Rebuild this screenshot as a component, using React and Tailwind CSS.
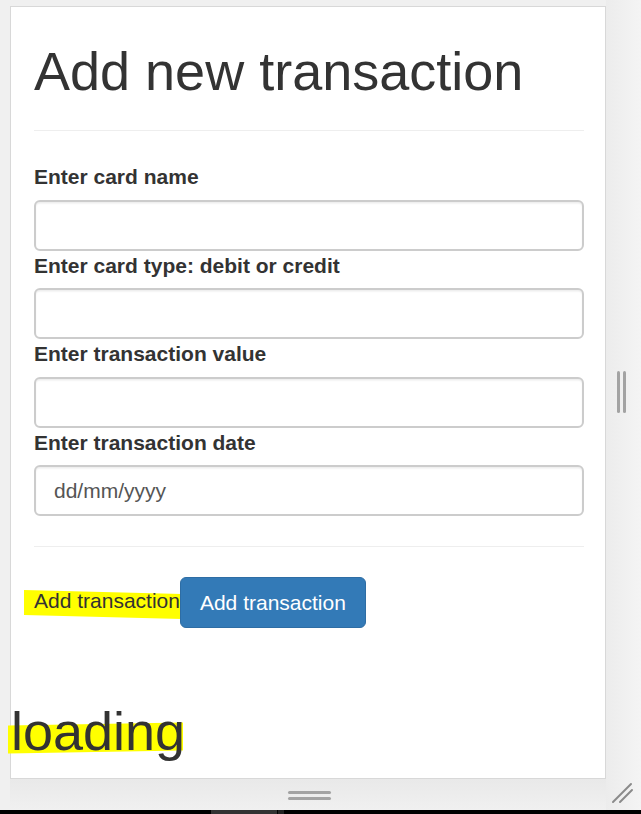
const Field = ({ label, placeholder }) => (
  <div>
    <label className="block font-bold leading-[30px] mb-[7.5px]">{label}</label>
    <input
      type="text"
      placeholder={placeholder}
      className="block w-full h-[51px] px-[18px] rounded-[6px] border-2 border-[#cccccc] bg-white text-[21px] text-[#555] placeholder:text-[#555] shadow-[inset_0_1.5px_1.5px_rgba(0,0,0,0.075)] outline-none"
    />
  </div>
);

const ResizeGrip = () => (
  <svg width="24" height="24" viewBox="0 0 24 24" fill="none" stroke="#8a8a8a" strokeWidth="2" strokeLinecap="round">
    <path d="M3 21 21 3" />
    <path d="M10 21 22 9" />
  </svg>
);

const App = () => {
  return (
    <div className="relative w-[641px] h-[814px] flex flex-col bg-[#f0f0f0] font-['Liberation_Sans',Arial,sans-serif] text-[#333] text-[21px] overflow-hidden">
      <div className="flex h-[810px]">
        {/* left column: panel + bottom handle */}
        <div className="w-[606px] flex flex-col pt-[6px] pl-[10px]">
          <div className="relative w-[596px] h-[773px] bg-white border border-[#d8d8d8]">
            <div className="pl-[23px] pr-[21px]">
              <h1 className="mt-[35px] text-[54px] leading-[59px] font-normal">Add new transaction</h1>
              <hr className="mt-[29px] mb-[31px] border-0 border-t border-[#eeeeee]" />

              <Field label="Enter card name" />
              <Field label="Enter card type: debit or credit" />
              <Field label="Enter transaction value" />
              <Field label="Enter transaction date" placeholder="dd/mm/yyyy" />

              <hr className="mt-[30px] mb-[30px] border-0 border-t border-[#eeeeee]" />

              <div className="flex items-start">
                <span className="relative mt-[8.5px] leading-[30px] whitespace-nowrap">
                  <span className="absolute left-[-10px] top-[6px] w-[158px] h-[25px] bg-[#ffff00] skew-y-[1.5deg]" />
                  <span className="relative">Add transaction</span>
                </span>
                <button className="relative h-[51px] px-[19px] rounded-[6px] bg-[#337ab7] border border-[#2e6da4] text-white text-[21px] leading-[30px] whitespace-nowrap">
                  Add transaction
                </button>
              </div>
            </div>

            <div className="relative mt-[74px] w-max text-[54px] leading-[59px]">
              <span className="absolute left-[-3px] top-[22px] w-[175px] h-[28px] bg-[#ffff00] skew-y-[-1deg]" />
              <span className="relative">loading</span>
            </div>
          </div>

          <div className="flex-1 bg-gradient-to-b from-[#e9e9e9] to-[#f0f0f0] pl-[278px] pt-[12px]">
            <div className="flex flex-col gap-[3px] w-[43px]">
              <div className="h-[3px] rounded-full bg-[#a3a3a3]" />
              <div className="h-[3px] rounded-full bg-[#a3a3a3]" />
            </div>
          </div>
        </div>

        {/* right strip with vertical handle */}
        <div className="flex-1 bg-[#f3f3f3] bg-gradient-to-r from-[#ececec] to-[#f4f4f4] pl-[11px] pt-[371px]">
          <div className="flex gap-[3px]">
            <div className="w-[3px] h-[42px] rounded-full bg-[#a3a3a3]" />
            <div className="w-[3px] h-[42px] rounded-full bg-[#a3a3a3]" />
          </div>
        </div>
      </div>

      {/* bottom black bar */}
      <div className="h-[4px] bg-black flex">
        <div className="ml-[211px] w-[66px] bg-[#333]" />
        <div className="ml-[1px] w-[6px] bg-[#222]" />
      </div>

      <div className="absolute left-[610px] top-[781px]">
        <ResizeGrip />
      </div>
    </div>
  );
};

export default App;
